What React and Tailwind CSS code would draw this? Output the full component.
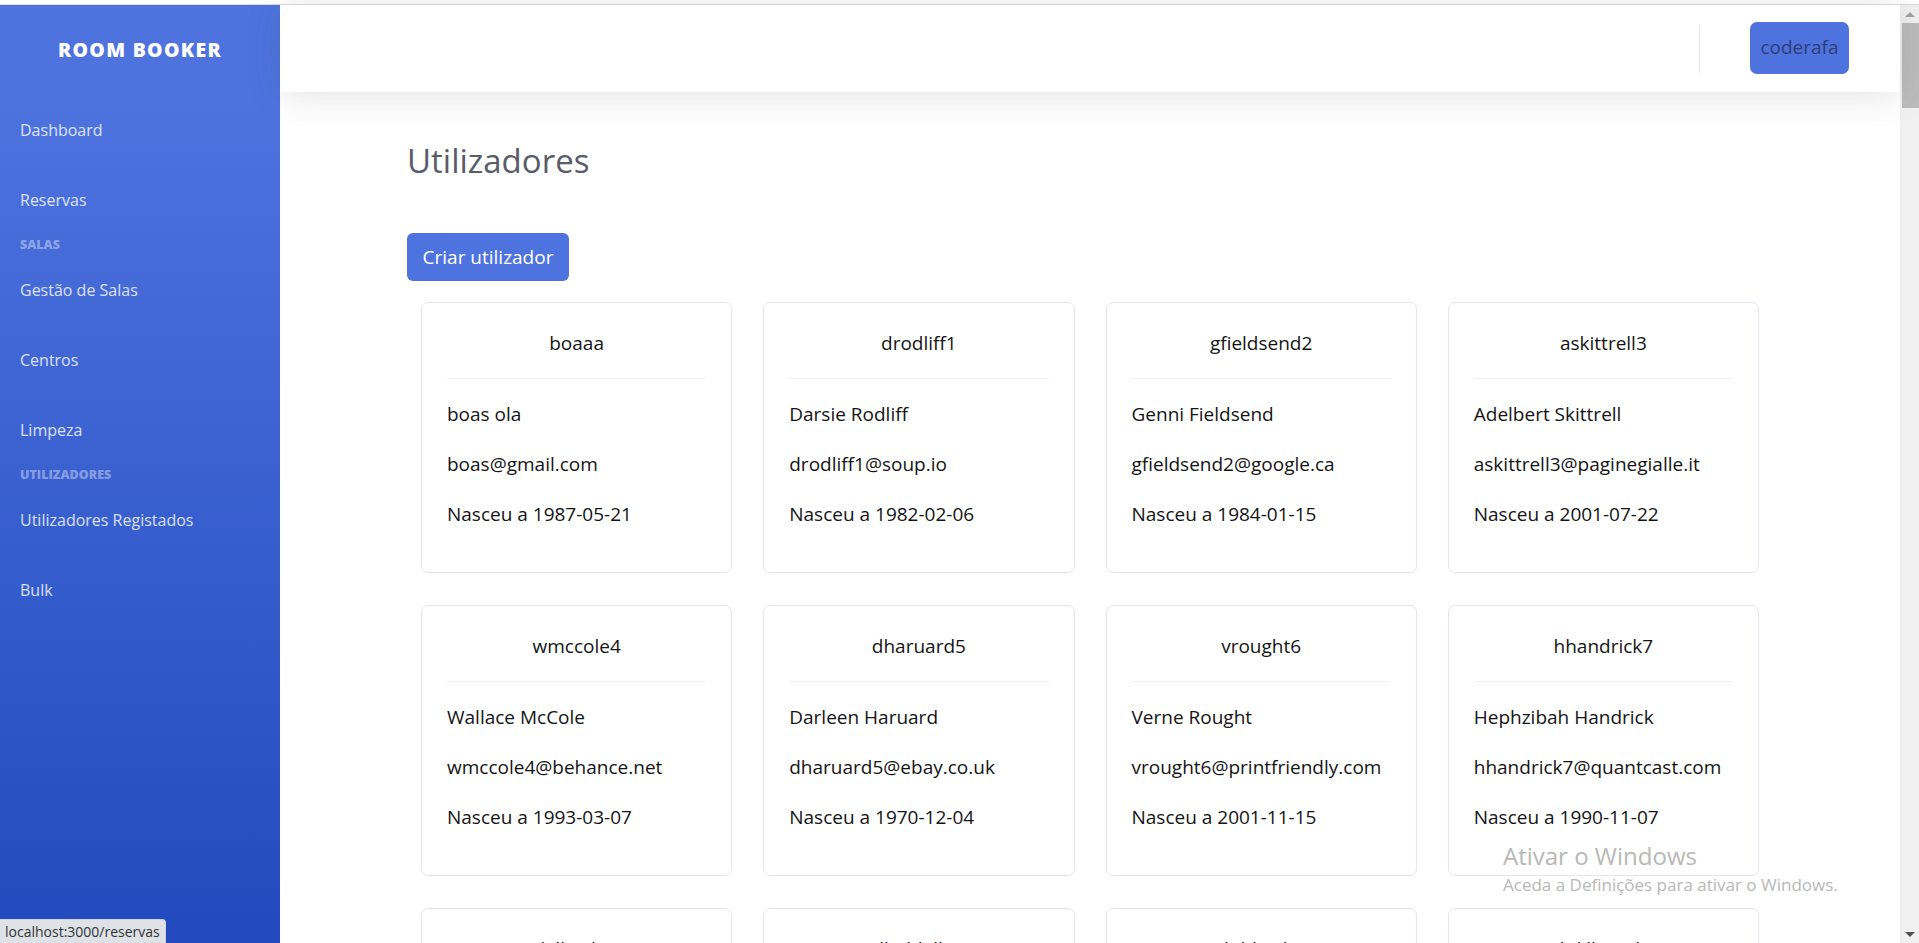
import React from "react";

const users = [
  ["boaaa", "boas ola", "boas@gmail.com", "1987-05-21"],
  ["drodliff1", "Darsie Rodliff", "drodliff1@soup.io", "1982-02-06"],
  ["gfieldsend2", "Genni Fieldsend", "gfieldsend2@google.ca", "1984-01-15"],
  ["askittrell3", "Adelbert Skittrell", "askittrell3@paginegialle.it", "2001-07-22"],
  ["wmccole4", "Wallace McCole", "wmccole4@behance.net", "1993-03-07"],
  ["dharuard5", "Darleen Haruard", "dharuard5@ebay.co.uk", "1970-12-04"],
  ["vrought6", "Verne Rought", "vrought6@printfriendly.com", "2001-11-15"],
  ["hhandrick7", "Hephzibah Handrick", "hhandrick7@quantcast.com", "1990-11-07"],
  ["ikilbride8", "Ilka Kilbride", "ikilbride8@tiny.cc", "1985-04-12"],
  ["lbaldelli9", "Lia Baldelli", "lbaldelli9@ning.com", "1978-09-30"],
  ["thildrotha", "Tim Hildroth", "thildrotha@ibm.com", "1996-02-18"],
  ["kdilliwayb", "Kit Dilliway", "kdilliwayb@globo.com", "1989-06-03"],
];

function NavItem({ children }) {
  return (
    <div className="h-[70px] flex items-center px-[20px] text-[16px] text-white/80">
      {children}
    </div>
  );
}

function NavHeading({ children }) {
  return (
    <div className="h-[20px] flex items-center px-[20px] text-[12.5px] font-extrabold uppercase text-white/40">
      {children}
    </div>
  );
}

export default function App() {
  return (
    <div
      className="w-[1919px] h-[943px] overflow-hidden bg-white relative flex flex-col"
      style={{ fontFamily: '"Open Sans", "Noto Sans", sans-serif' }}
    >
      <div className="h-[5px] border-b border-[#dadce0] bg-white shrink-0" />
      <div className="flex flex-1 min-h-0">
        {/* Sidebar */}
        <aside className="w-[280px] shrink-0 bg-[linear-gradient(180deg,#4e73df_10%,#224abe_100%)] flex flex-col">
          <div className="h-[90px] flex items-center justify-center text-white text-[19.5px] font-extrabold tracking-[1.3px] uppercase">
            Room Booker
          </div>
          <NavItem>Dashboard</NavItem>
          <NavItem>Reservas</NavItem>
          <NavHeading>Salas</NavHeading>
          <NavItem>Gestão de Salas</NavItem>
          <NavItem>Centros</NavItem>
          <NavItem>Limpeza</NavItem>
          <NavHeading>Utilizadores</NavHeading>
          <NavItem>Utilizadores Registados</NavItem>
          <NavItem>Bulk</NavItem>
        </aside>

        {/* Main */}
        <main className="flex-1 min-w-0 flex flex-col">
          <header className="h-[87px] shrink-0 bg-white shadow-[0_3px_35px_0_rgba(58,59,69,0.15)] flex items-center justify-end relative z-10">
            <div className="w-px h-[48px] bg-[#e3e6f0] mr-[50px]" />
            <div className="h-[52px] w-[99px] rounded-[7px] bg-[#4e73df] flex items-center justify-center text-[19px] text-[#2f3c78] mr-[51px] mt-[-2px]">
              coderafa
            </div>
          </header>
          <div className="w-[1366px] mx-auto pt-[48px]">
            <h1 className="text-[33px] leading-[42px] text-[#5a5c69] font-normal">Utilizadores</h1>
            <button className="mt-[51px] h-[48px] w-[162px] rounded-[6px] bg-[#4e73df] text-white text-[19px] flex items-center justify-center">
              Criar utilizador
            </button>
            <div className="mt-[21px] px-[14px] grid grid-cols-4 gap-x-[31px] gap-y-[32px]">
              {users.map((u) => (
                <div
                  key={u[0]}
                  className="h-[271px] border border-[#e3e6f0] rounded-[7px] bg-white px-[25px] pt-[25px] text-[19px] leading-[30px] text-[#141414]"
                >
                  <div className="text-center">{u[0]}</div>
                  <div className="mt-[20px] mb-[20px] border-t border-[#f0f0f0]" />
                  <p className="mb-[20px]">{u[1]}</p>
                  <p className="mb-[20px]">{u[2]}</p>
                  <p className="mb-[20px]">Nasceu a {u[3]}</p>
                </div>
              ))}
            </div>
          </div>
        </main>

        {/* Scrollbar */}
        <div className="w-[19px] shrink-0 bg-[#f0f0f0] flex flex-col items-center">
          <div className="h-[18px] flex items-center justify-center">
            <div className="w-0 h-0 border-l-[5px] border-r-[5px] border-b-[5px] border-l-transparent border-r-transparent border-b-[#a3a3a3]" />
          </div>
          <div className="w-[17px] h-[85px] bg-[#bcbcbc] ml-[1px]" />
          <div className="flex-1" />
          <div className="h-[18px] flex items-center justify-center">
            <div className="w-0 h-0 border-l-[5px] border-r-[5px] border-t-[5px] border-l-transparent border-r-transparent border-t-[#505050]" />
          </div>
        </div>
      </div>

      {/* Windows activation watermark */}
      <div className="absolute left-[1503px] top-[840px] text-[#b8b8b8] pointer-events-none">
        <div className="text-[24px] leading-[32px]">Ativar o Windows</div>
        <div className="text-[17px] leading-[22px] mt-[2px]">Aceda a Definições para ativar o Windows.</div>
      </div>

      {/* Status bar */}
      <div className="absolute left-0 bottom-0 h-[24px] px-[5px] bg-[#dee1e6] rounded-tr-[4px] flex items-center text-[14px] text-[#333] border-t border-r border-[#cfd2d7]">
        localhost:3000/reservas
      </div>
    </div>
  );
}
